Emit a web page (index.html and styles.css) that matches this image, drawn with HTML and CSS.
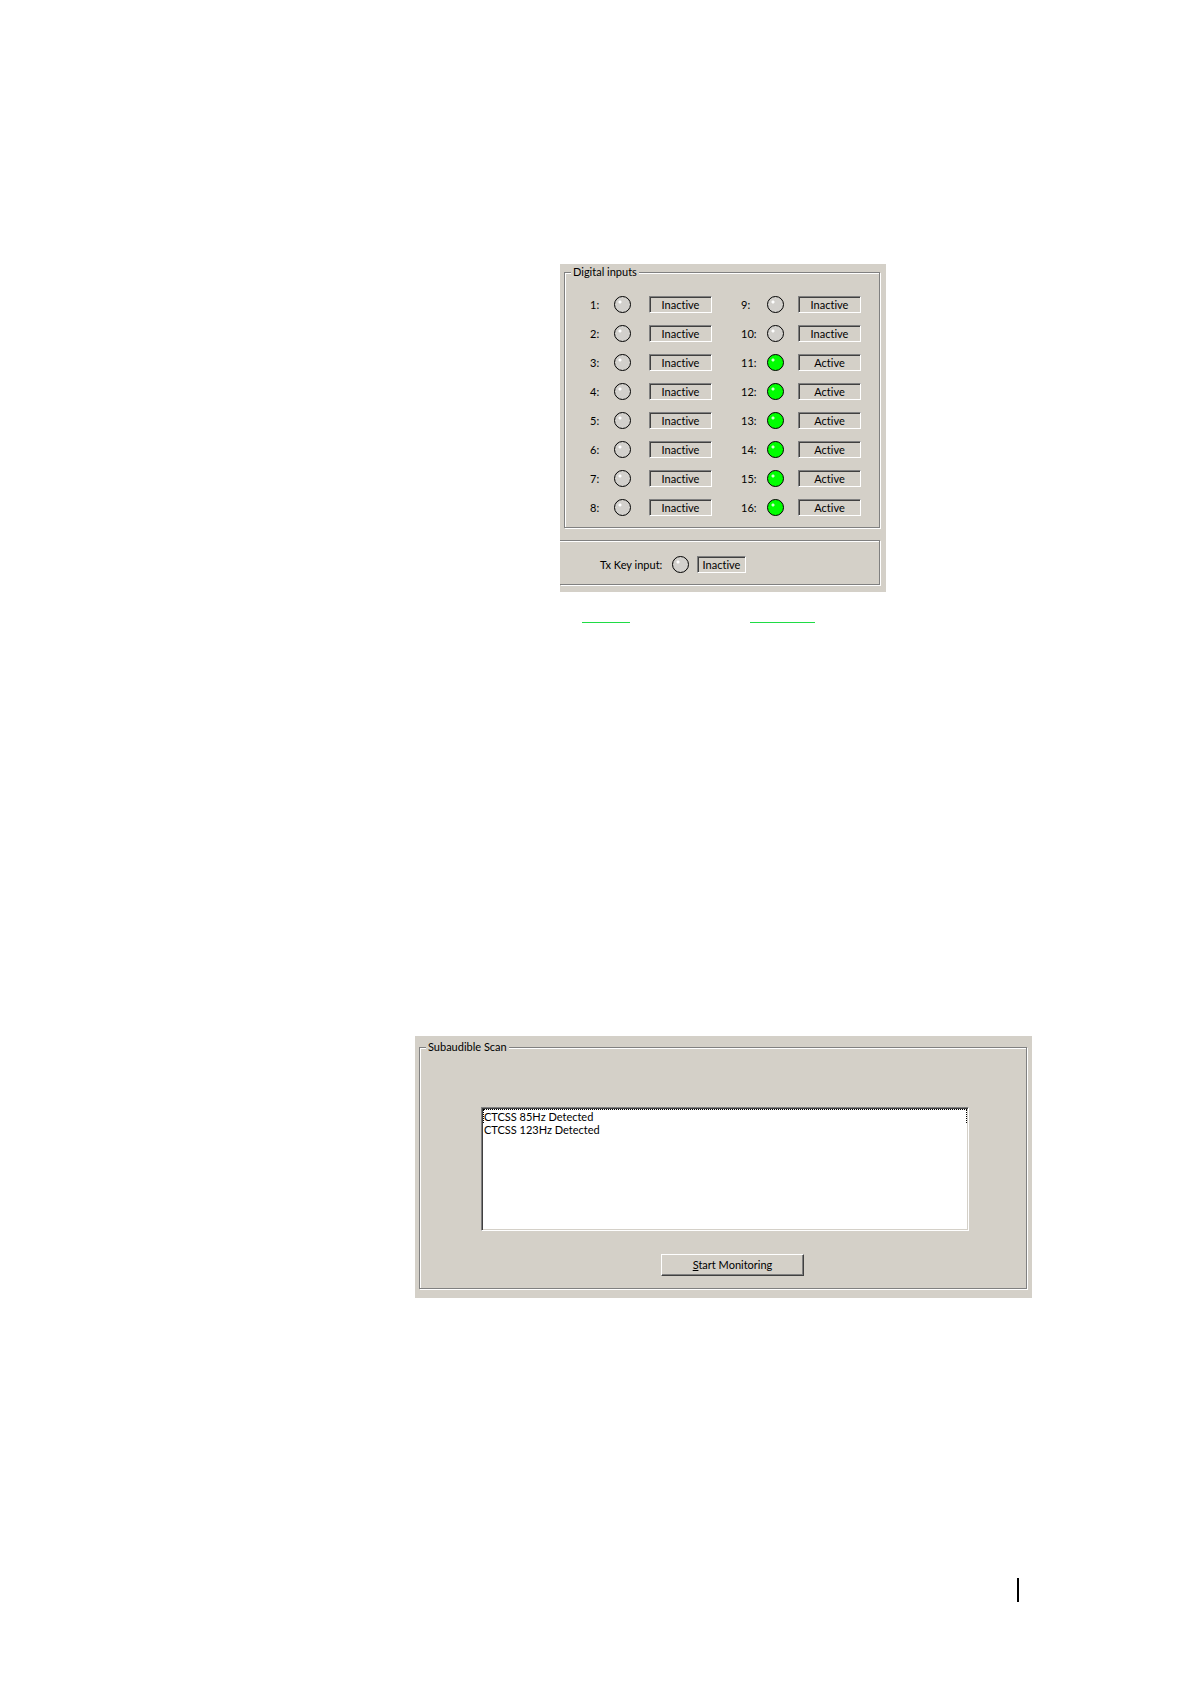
FILE: index.html
```html
<!DOCTYPE html>
<html lang="en">
<head>
    <meta charset="UTF-8">
    <meta name="viewport" content="width=device-width, initial-scale=1.0">
    <title>Monitoring</title>
    <link rel="stylesheet" href="styles.css">
</head>
<body>
    <main class="page">
        <section class="panel inputs-panel">
            <fieldset class="group">
                <legend>Digital inputs</legend>
                <div class="inputs">
                    <div class="column">
                        <div class="row"><label for="in1">1:</label><span class="led"></span><output id="in1">Inactive</output></div>
                        <div class="row"><label for="in2">2:</label><span class="led"></span><output id="in2">Inactive</output></div>
                        <div class="row"><label for="in3">3:</label><span class="led"></span><output id="in3">Inactive</output></div>
                        <div class="row"><label for="in4">4:</label><span class="led"></span><output id="in4">Inactive</output></div>
                        <div class="row"><label for="in5">5:</label><span class="led"></span><output id="in5">Inactive</output></div>
                        <div class="row"><label for="in6">6:</label><span class="led"></span><output id="in6">Inactive</output></div>
                        <div class="row"><label for="in7">7:</label><span class="led"></span><output id="in7">Inactive</output></div>
                        <div class="row"><label for="in8">8:</label><span class="led"></span><output id="in8">Inactive</output></div>
                    </div>
                    <div class="column">
                        <div class="row"><label for="in9">9:</label><span class="led"></span><output id="in9">Inactive</output></div>
                        <div class="row"><label for="in10">10:</label><span class="led"></span><output id="in10">Inactive</output></div>
                        <div class="row"><label for="in11">11:</label><span class="led on"></span><output id="in11">Active</output></div>
                        <div class="row"><label for="in12">12:</label><span class="led on"></span><output id="in12">Active</output></div>
                        <div class="row"><label for="in13">13:</label><span class="led on"></span><output id="in13">Active</output></div>
                        <div class="row"><label for="in14">14:</label><span class="led on"></span><output id="in14">Active</output></div>
                        <div class="row"><label for="in15">15:</label><span class="led on"></span><output id="in15">Active</output></div>
                        <div class="row"><label for="in16">16:</label><span class="led on"></span><output id="in16">Active</output></div>
                    </div>
                </div>
            </fieldset>
            <div class="group tx-key">
                <label for="txkey">Tx Key input:</label><span class="led"></span><output id="txkey">Inactive</output>
            </div>
        </section>

        <div class="rules">
            <span class="rule"></span>
            <span class="rule rule-long"></span>
        </div>

        <section class="panel scan-panel">
            <fieldset class="group">
                <legend id="scan-title">Subaudible Scan</legend>
                <select class="scan-list" size="9" aria-labelledby="scan-title">
                    <option>CTCSS 85Hz Detected</option>
                    <option>CTCSS 123Hz Detected</option>
                </select>
                <button class="start" type="button"><u>S</u>tart Monitoring</button>
            </fieldset>
        </section>

        <footer class="page-footer"></footer>
    </main>
</body>
</html>
```

FILE: styles.css
```css
* {
    box-sizing: border-box;
}

body {
    margin: 0;
    background-color: #fff;
    color: #000;
    font-family: Lato, "Liberation Sans", Arial, sans-serif;
    font-size: 11px;
    line-height: 16px;
    font-variant-ligatures: none;
}

.page {
    padding: 264px 158px 82px 415px;
}

.panel {
    background-color: #d4d0c8;
}

/* etched frame */
.group {
    min-width: 0;
    margin: 0;
    padding: 0;
    border: 1px solid #808080;
    box-shadow: 1px 1px 0 #fff, inset 1px 1px 0 #fff;
}

.group legend {
    margin-left: 6px;
    padding: 0 2px;
    background-color: #d4d0c8;
}

/* Digital inputs */
.inputs-panel {
    width: 326px;
    margin: 0 146px 0 auto;
    padding: 0 6px 7px 4px;
}

.inputs {
    display: flex;
    gap: 29px;
    padding: 10px 18px 5px 25px;
}

.column {
    width: 122px;
}

.column + .column {
    flex: 1;
}

.row {
    display: flex;
    align-items: center;
    height: 29px;
}

.row label {
    width: 24px;
}

.column + .column label {
    width: 26px;
}

.row output {
    width: 63px;
    margin-left: auto;
}

.led {
    flex: none;
    width: 17px;
    height: 17px;
    border: 1px solid #000;
    border-radius: 50%;
    background: radial-gradient(circle at 5px 5px, #fff 1px, transparent 2px) #d2d0cc;
}

.led.on {
    background: radial-gradient(circle at 5px 5px, #cfc 1px, transparent 2px) #0f0;
}

output {
    height: 17px;
    border: 1px solid;
    border-color: #808080 #fff #fff #808080;
    box-shadow: inset 1px 1px 0 #404040;
    line-height: 16px;
    text-align: center;
}

.tx-key {
    display: flex;
    align-items: center;
    height: 45px;
    margin: 12px 0 0 -4px;
    padding: 4px 0 0 40px;
    border-left: none;
    box-shadow: 1px 1px 0 #fff, inset 0 1px 0 #fff;
}

.tx-key label {
    width: 72px;
}

.tx-key output {
    width: 49px;
    margin-left: 8px;
}

.rules {
    display: flex;
    gap: 120px;
    margin: 30px 0 413px;
    padding-left: 167px;
}

.rule {
    width: 48px;
    height: 1px;
    background-color: #1fdc45;
}

.rule-long {
    width: 65px;
}

/* Subaudible scan */
.scan-panel {
    padding: 3px 5px 9px 4px;
}

.scan-panel .group {
    padding: 52px 57px 12px 61px;
}

.scan-panel .group legend {
    margin-left: -55px;
}

.scan-list {
    display: block;
    width: 100%;
    height: 124px;
    padding: 0;
    overflow: hidden;
    border: 1px solid;
    border-color: #808080 #fff #fff #808080;
    border-radius: 0;
    box-shadow: inset 1px 1px 0 #404040, inset -1px -1px 0 #d4d0c8;
    background-color: #fff;
    color: #000;
    font: inherit;
    outline: none;
}

.scan-list option {
    min-height: 13px;
    margin: 0 1px;
    padding: 0 1px;
    line-height: 13px;
}

.scan-list option:first-child {
    min-height: 12px;
    margin-top: 1px;
    padding: 0;
    border: 1px dotted #000;
    border-bottom: none;
    line-height: 11px;
}

.start {
    display: block;
    width: 143px;
    height: 22px;
    margin: 23px 0 0 180px;
    padding: 0;
    border: 1px solid;
    border-color: #fff #404040 #404040 #fff;
    border-radius: 0;
    box-shadow: inset -1px -1px 0 #808080;
    background-color: #d4d0c8;
    color: #000;
    font: inherit;
}

.page-footer {
    width: 2px;
    height: 24px;
    margin: 280px 13px 0 auto;
    background-color: #000;
}
```
